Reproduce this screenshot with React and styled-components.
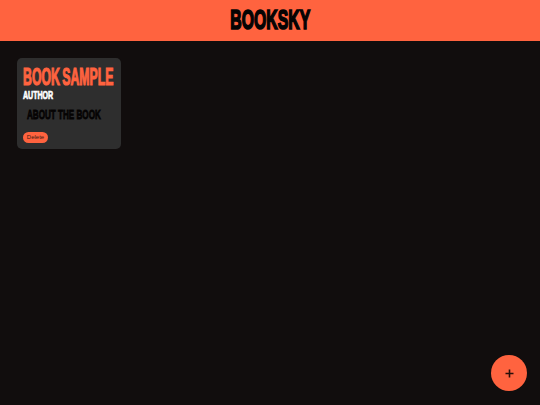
import styled, { createGlobalStyle } from 'styled-components';

const GlobalStyle = createGlobalStyle`
  html, body {
    margin: 0;
    height: 100%;
    background-color: #110d0d;
    font-family: "Liberation Sans", Arial, sans-serif;
  }
  #root {
    min-height: 100%;
  }
`;

const Page = styled.div`
  min-height: 405px;
  display: flex;
  flex-direction: column;
`;

const Header = styled.header`
  height: 41px;
  background-color: #ff633f;
  display: flex;
  align-items: center;
  justify-content: center;
`;

// no condensed display face is installed, so the headings are squeezed horizontally
const Logo = styled.h1`
  margin: 0;
  font-size: 27px;
  font-weight: 700;
  color: #050303;
  -webkit-text-stroke: 1.7px #050303;
  transform: scaleX(0.585);
`;

const Books = styled.main`
  padding: 17px;
  display: flex;
  flex-wrap: wrap;
  gap: 17px;
`;

const Card = styled.article`
  width: 104px;
  height: 91px;
  box-sizing: border-box;
  padding: 9px 6px 6px;
  background-color: #2e2e2e;
  border-radius: 5px;
  display: flex;
  flex-direction: column;
  align-items: flex-start;
`;

const Heading = styled.div`
  font-weight: 700;
  white-space: nowrap;
  transform-origin: left center;
`;

const Title = styled(Heading).attrs({ as: 'h2' })`
  margin: 0;
  font-size: 23px;
  line-height: 20px;
  word-spacing: -2px;
  color: #ff633f;
  -webkit-text-stroke: 1.2px #ff633f;
  transform: scaleX(0.535);
`;

const Author = styled(Heading).attrs({ as: 'h3' })`
  margin: 2px 0 0;
  font-size: 11px;
  line-height: 13px;
  color: #ffffff;
  -webkit-text-stroke: 0.7px #ffffff;
  transform: scaleX(0.64);
`;

const About = styled(Heading).attrs({ as: 'p' })`
  margin: 5px 0 0 4px;
  font-size: 13.5px;
  line-height: 15px;
  color: #050303;
  -webkit-text-stroke: 0.8px #050303;
  transform: scaleX(0.6);
`;

const DeleteButton = styled.button`
  margin-top: auto;
  width: 25px;
  height: 11px;
  padding: 0;
  border: none;
  border-radius: 6px;
  background-color: #ff633f;
  color: #3a1a12;
  font-family: "Liberation Sans", Arial, sans-serif;
  font-size: 6px;
  line-height: 11px;
`;

const AddButton = styled.button`
  position: fixed;
  right: 13px;
  bottom: 14px;
  width: 36px;
  height: 36px;
  padding: 0;
  border: none;
  border-radius: 50%;
  background-color: #ff633f;
  color: #2a0f0a;
  display: flex;
  align-items: center;
  justify-content: center;
`;

function App() {
  return (
    <Page>
      <GlobalStyle />
      <Header>
        <Logo>BOOKSKY</Logo>
      </Header>
      <Books>
        <Card>
          <Title>BOOK SAMPLE</Title>
          <Author>AUTHOR</Author>
          <About>ABOUT THE BOOK</About>
          <DeleteButton>Delete</DeleteButton>
        </Card>
      </Books>
      <AddButton aria-label="Add book">
        <svg width="9" height="9" viewBox="0 0 9 9" fill="none" stroke="currentColor" strokeWidth="1.6">
          <path d="M4.5 0.5v8M0.5 4.5h8" />
        </svg>
      </AddButton>
    </Page>
  );
}

export default App;
